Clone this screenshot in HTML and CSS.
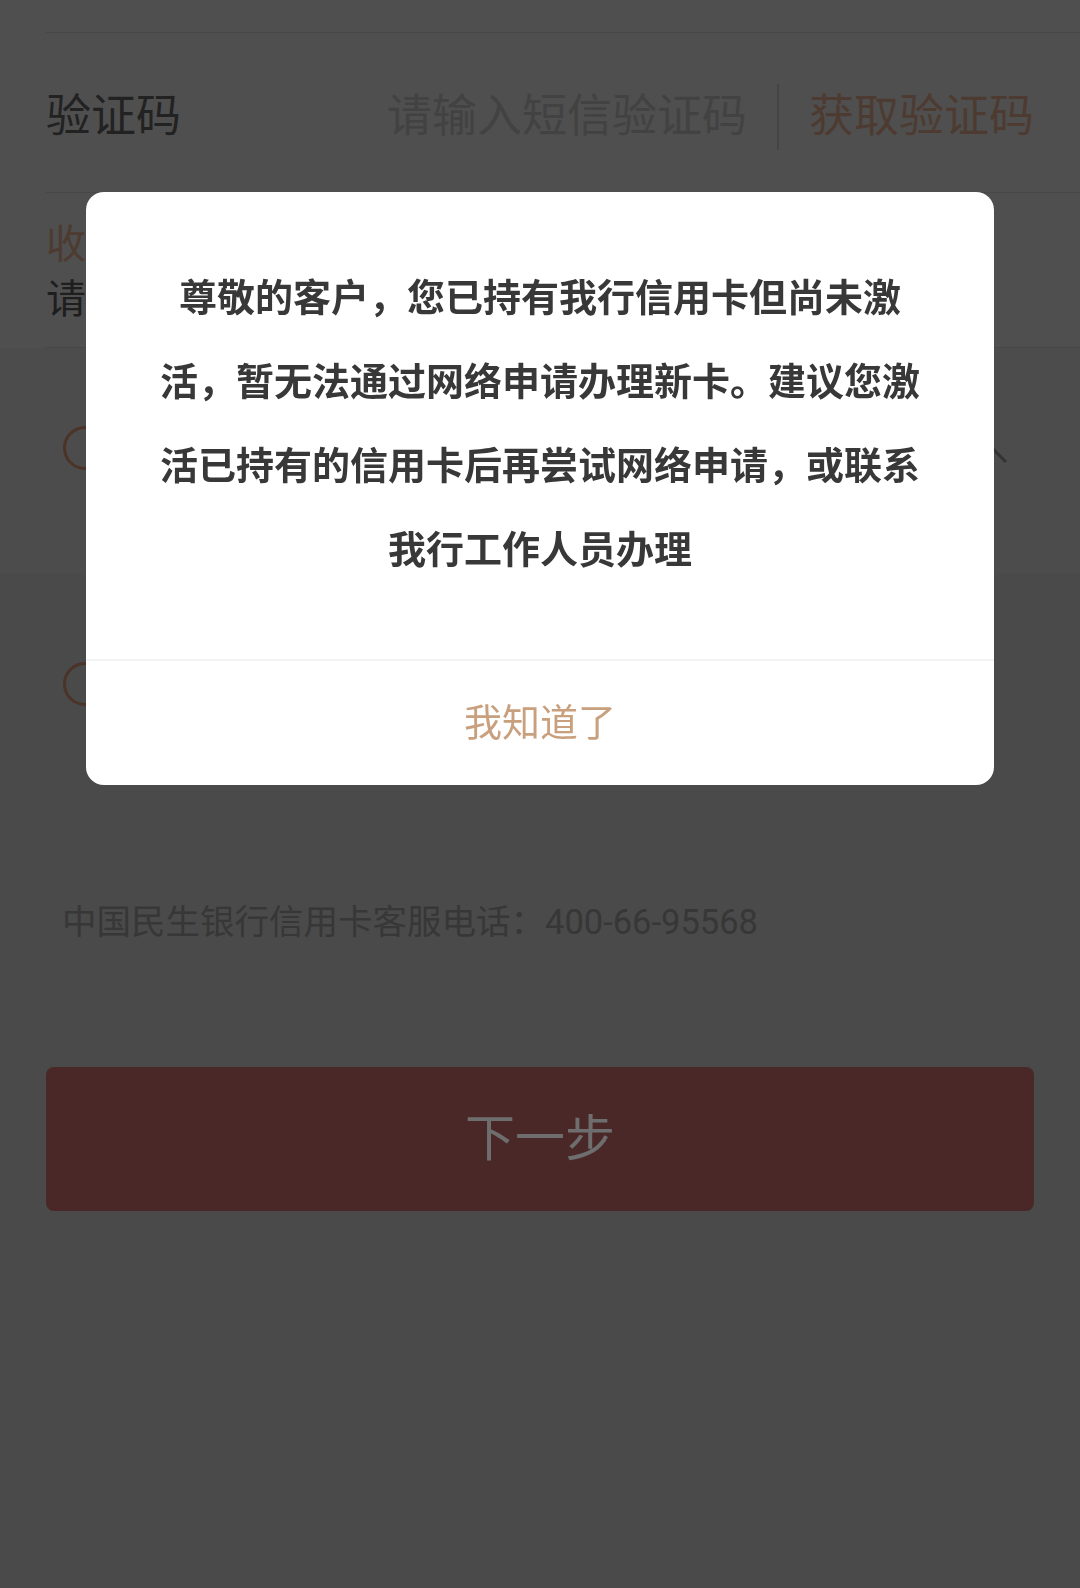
FILE: index.html
```html
<!DOCTYPE html>
<html>
	<head>
		<meta charset="utf-8">
		<title>申请信用卡</title>
		<link rel="stylesheet" href="styles.css">
	</head>
	<body>
		<div class="page">
			<div class="form">
				<div class="form-row row-top"></div>
				<div class="form-row row-code">
					<span class="label">验证码</span>
					<span class="code-input">请输入短信验证码</span>
					<span class="split"></span>
					<a href="javascript:void(0)" class="get-code">获取验证码</a>
				</div>
				<div class="form-row row-addr">
					<p class="addr-title">收卡</p>
					<p class="addr-value">请选</p>
				</div>
			</div>
			<!-- 寄送方式 -->
			<div class="option option-open">
				<i class="radio"></i>
				<svg class="arrow" width="28" height="16" viewBox="0 0 28 16"><polyline points="2,14 14,2 26,14" fill="none" stroke="#666" stroke-width="3"/></svg>
			</div>
			<div class="grey">
				<div class="option">
					<i class="radio"></i>
				</div>
				<p class="hotline">中国民生银行信用卡客服电话：400-66-95568</p>
				<a href="javascript:void(0)" class="next-btn">下一步</a>
			</div>
		</div>

		<div class="mask"></div>
		<div class="dialog">
			<div class="dialog-msg">尊敬的客户，您已持有我行信用卡但尚未激活，暂无法通过网络申请办理新卡。建议您激活已持有的信用卡后再尝试网络申请，或联系我行工作人员办理</div>
			<a href="javascript:void(0)" class="dialog-btn">我知道了</a>
		</div>
	</body>
</html>
```

FILE: styles.css
```css
*{margin:0;padding:0;box-sizing:border-box;}
a{text-decoration:none;}
body{width:1080px;min-height:1588px;background:#949494;font-family:"Roboto","Noto Sans CJK SC",sans-serif;}

.form{background:#9e9e9e;padding-left:46px;}
.form-row{border-bottom:1px solid #8e8e8e;display:flex;align-items:center;padding-right:46px;}
.row-top{height:33px;}
.row-code{height:160px;padding-top:8px;}
.row-code .label{font-size:45px;color:#444;line-height:60px;}
.code-input{flex:1;text-align:right;font-size:45px;color:#848484;line-height:60px;}
.split{width:2px;height:66px;background:#888;margin:0 30px 0 30px;}
.get-code{font-size:45px;color:#9a7662;line-height:60px;}

.form .row-addr{height:155px;display:block;padding-top:24px;}
.addr-title{font-size:40px;line-height:55px;color:#9a7662;}
.addr-value{font-size:40px;line-height:55px;color:#3c3c3c;}

.option{display:flex;align-items:flex-start;padding-left:63px;}
.option-open{background:#989898;height:225px;padding-top:78px;padding-right:72px;}
.radio{display:block;width:44px;height:44px;border:3px solid #966650;border-radius:50%;flex-shrink:0;}
.arrow{margin-left:auto;margin-top:22px;}

.grey{padding-top:89px;}
.hotline{font-size:34.5px;line-height:48px;color:#6e6e6e;padding-left:62px;margin-top:192px;}
.next-btn{display:block;margin:121px 46px 0;height:144px;line-height:144px;border-radius:8px;background:#945050;color:#dcdcdc;font-size:50px;text-align:center;}

.mask{position:fixed;left:0;top:0;right:0;bottom:0;background:rgba(0,0,0,.5);}
.dialog{position:fixed;top:192px;left:0;right:0;margin:0 auto;width:908px;background:#fff;border-radius:18px;overflow:hidden;}
.dialog-msg{padding:64px 70px 67px;font-size:38px;line-height:84px;font-weight:bold;color:#383838;text-align:center;}
.dialog-btn{display:block;border-top:2px solid #f4f4f4;height:126px;line-height:124px;font-size:38px;color:#c9a07e;text-align:center;}
```
